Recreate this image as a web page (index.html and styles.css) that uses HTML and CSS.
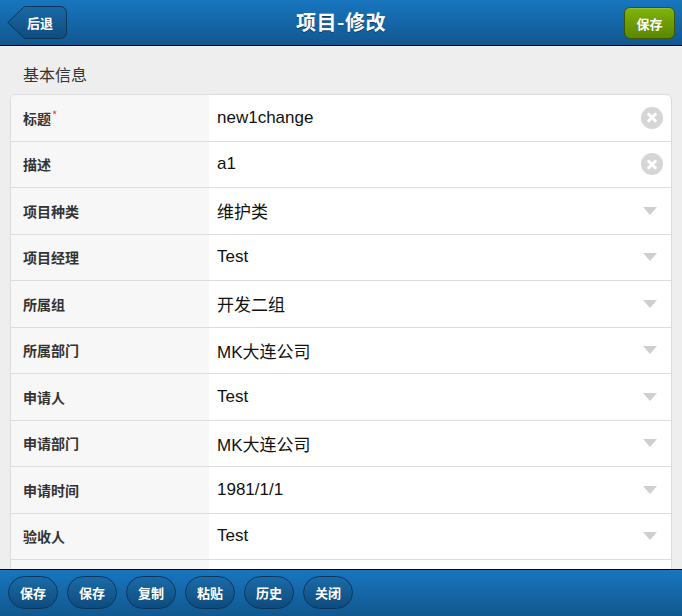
FILE: index.html
```html
<!DOCTYPE html>
<html lang="zh">
<head>
<meta charset="utf-8">
<title>项目-修改</title>
<link rel="stylesheet" href="styles.css">
</head>
<body>
<div class="page">
<header class="topbar">
  <a class="back-btn">
    <svg class="back-shape" width="60" height="34" viewBox="0 0 60 34">
      <defs>
        <linearGradient id="bg1" x1="0" y1="0" x2="0" y2="1">
          <stop offset="0" stop-color="#1a6aa6"/>
          <stop offset="1" stop-color="#0f4c7e"/>
        </linearGradient>
      </defs>
      <path d="M17.5,0.5 H53.5 a6,6 0 0 1 6,6 V26.5 a6,6 0 0 1 -6,6 H17.5 L0.8,16.5 Z" fill="url(#bg1)" stroke="#0a355a" stroke-width="1"/>
    </svg>
    <span class="back-text">后退</span>
  </a>
  <h1 class="title">项目-修改</h1>
  <a class="save-btn">保存</a>
</header>

<main class="content">
  <div class="section-title">基本信息</div>
  <ul class="form-list">
    <li class="row"><div class="label">标题<span class="req">*</span></div><div class="value">new1change<span class="clear"></span></div></li>
    <li class="row"><div class="label">描述</div><div class="value">a1<span class="clear"></span></div></li>
    <li class="row"><div class="label">项目种类</div><div class="value">维护类<span class="caret"></span></div></li>
    <li class="row"><div class="label">项目经理</div><div class="value">Test<span class="caret"></span></div></li>
    <li class="row"><div class="label">所属组</div><div class="value">开发二组<span class="caret"></span></div></li>
    <li class="row"><div class="label">所属部门</div><div class="value">MK大连公司<span class="caret"></span></div></li>
    <li class="row"><div class="label">申请人</div><div class="value">Test<span class="caret"></span></div></li>
    <li class="row"><div class="label">申请部门</div><div class="value">MK大连公司<span class="caret"></span></div></li>
    <li class="row"><div class="label">申请时间</div><div class="value">1981/1/1<span class="caret"></span></div></li>
    <li class="row"><div class="label">验收人</div><div class="value">Test<span class="caret"></span></div></li>
    <li class="row"><div class="label"></div><div class="value"></div></li>
  </ul>
</main>

<footer class="bottombar">
  <a class="pill">保存</a>
  <a class="pill">保存</a>
  <a class="pill">复制</a>
  <a class="pill">粘贴</a>
  <a class="pill">历史</a>
  <a class="pill">关闭</a>
</footer>
</div>
</body>
</html>
```

FILE: styles.css
```css
* { box-sizing: border-box; }
html, body { margin: 0; padding: 0; }
body {
  background: #eeeeee;
  font-family: "Liberation Sans", Arial, "Noto Sans CJK SC", sans-serif;
  color: #222;
}
a { text-decoration: none; cursor: pointer; }

.page {
  width: 682px;
  height: 616px;
  display: flex;
  flex-direction: column;
  overflow: hidden;
}

.topbar {
  position: relative;
  flex: 0 0 46px;
  background: linear-gradient(#1876bf, #11578f);
  border-bottom: 1px solid #000;
  display: flex;
  align-items: center;
  justify-content: center;
}
.title {
  margin: 0;
  font-family: "Noto Sans CJK SC", sans-serif;
  font-size: 20px;
  font-weight: bold;
  color: #fff;
  letter-spacing: 0.5px;
  line-height: 24px;
  margin-top: -2px;
  text-shadow: 0 1px 0 #0b3c63;
}
.back-btn {
  position: absolute;
  left: 7px;
  top: 6px;
  width: 60px;
  height: 34px;
  display: flex;
  align-items: center;
}
.back-shape { position: absolute; left: 0; top: 0; }
.back-text {
  position: relative;
  margin-left: 20px;
  font-family: "Noto Sans CJK SC", sans-serif;
  font-size: 13px;
  font-weight: bold;
  color: #fff;
  line-height: 16px;
}
.save-btn {
  position: absolute;
  right: 7px;
  top: 7px;
  width: 51px;
  height: 32px;
  border: 1px solid #3a5600;
  border-radius: 6px;
  background: linear-gradient(#80b30b, #5a8700);
  color: #fff;
  font-family: "Noto Sans CJK SC", sans-serif;
  font-size: 13px;
  font-weight: bold;
  display: flex;
  align-items: center;
  justify-content: center;
  box-shadow: inset 0 1px 0 rgba(255,255,255,0.15);
}

.content {
  flex: 1 1 auto;
  min-height: 0;
  overflow: hidden;
  padding: 0 10px;
}
.section-title {
  padding: 18px 0 0 13px;
  height: 48px;
  font-family: "Noto Sans CJK SC", sans-serif;
  font-size: 16px;
  line-height: 20px;
  color: #333;
}
.form-list {
  list-style: none;
  margin: 0;
  padding: 0;
  background: #fff;
  border: 1px solid #dcdcdc;
  border-radius: 6px;
  overflow: hidden;
}
.row {
  display: flex;
  height: 46.5px;
  border-top: 1px solid #dcdcdc;
}
.row:first-child { border-top: none; height: 45.5px; }
.label {
  width: 198px;
  background: #f7f7f7;
  padding-left: 12px;
  display: flex;
  align-items: center;
  font-family: "Noto Sans CJK SC", sans-serif;
  font-size: 14px;
  font-weight: bold;
  color: #333;
}
.req {
  color: #d33;
  font-size: 11px;
  align-self: flex-start;
  margin-top: 11px;
  margin-left: 1px;
  font-weight: normal;
}
.value {
  flex: 1;
  position: relative;
  padding-left: 8px;
  display: flex;
  align-items: center;
  font-family: "Liberation Sans", Arial, "Noto Sans CJK SC", sans-serif;
  font-size: 17px;
  color: #111;
}
.clear {
  position: absolute;
  right: 8px;
  top: 50%;
  width: 22px;
  height: 22px;
  margin-top: -11px;
  border-radius: 50%;
  background: #d6d6d6;
}
.clear::before, .clear::after {
  content: "";
  position: absolute;
  left: 5px;
  top: 9.5px;
  width: 12px;
  height: 3px;
  background: #fff;
  border-radius: 1px;
  transform: rotate(45deg);
}
.clear::after { transform: rotate(-45deg); }
.caret {
  position: absolute;
  right: 14px;
  top: 50%;
  margin-top: -4px;
  width: 0;
  height: 0;
  border-left: 7px solid transparent;
  border-right: 7px solid transparent;
  border-top: 8px solid #cfcfcf;
}

.bottombar {
  flex: 0 0 47px;
  background: linear-gradient(#1876bf, #11578f);
  border-top: 1px solid #000;
  display: flex;
  gap: 9px;
  padding: 6px 0 0 8px;
}
.pill {
  width: 50px;
  height: 33px;
  border: 1px solid #0a365c;
  border-radius: 17px;
  background: linear-gradient(#1b6ba8, #0e4b7d);
  color: #fff;
  font-family: "Noto Sans CJK SC", sans-serif;
  font-size: 13px;
  font-weight: bold;
  display: flex;
  align-items: center;
  justify-content: center;
}
```
